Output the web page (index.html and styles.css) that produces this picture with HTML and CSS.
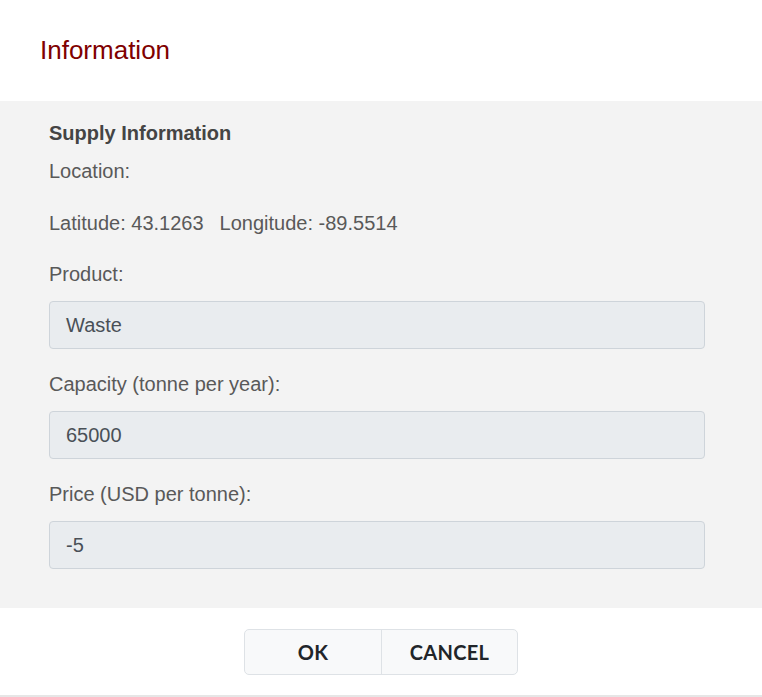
FILE: index.html
```html
<!DOCTYPE html>
<html lang="en">
<head>
<meta charset="utf-8">
<title>Information</title>
<link rel="stylesheet" href="styles.css">
</head>
<body>
<div class="dialog">
  <header class="dialog-header">
    <h1 class="dialog-title">Information</h1>
  </header>
  <main class="dialog-body">
    <h2 class="section-title">Supply Information</h2>
    <div class="text-row">Location:</div>
    <div class="text-row coords"><span>Latitude: 43.1263</span><span>Longitude: -89.5514</span></div>
    <div class="field">
      <label class="field-label">Product:</label>
      <div class="field-input">Waste</div>
    </div>
    <div class="field">
      <label class="field-label">Capacity (tonne per year):</label>
      <div class="field-input">65000</div>
    </div>
    <div class="field">
      <label class="field-label">Price (USD per tonne):</label>
      <div class="field-input">-5</div>
    </div>
  </main>
  <footer class="dialog-footer">
    <div class="btn-group">
      <button class="btn">OK</button>
      <button class="btn">CANCEL</button>
    </div>
  </footer>
</div>
</body>
</html>
```

FILE: styles.css
```css
html, body {
  margin: 0;
  padding: 0;
  background: #ffffff;
}
body {
  font-family: "Liberation Sans", Arial, sans-serif;
}
.dialog {
  width: 762px;
  height: 697px;
  display: flex;
  flex-direction: column;
  box-sizing: border-box;
  border-bottom: 2px solid #e6e6e6;
}
.dialog-header {
  height: 101px;
  display: flex;
  align-items: center;
  padding-left: 40px;
  box-sizing: border-box;
}
.dialog-title {
  margin: 0;
  font-weight: normal;
  font-size: 26px;
  line-height: 30px;
  color: #800000;
  position: relative;
  top: -1px;
}
.dialog-body {
  background: #f3f3f3;
  padding: 20px 57px 39px 49px;
  display: flex;
  flex-direction: column;
}
.section-title {
  margin: 0 0 14px 0;
  font-size: 20px;
  line-height: 24px;
  font-weight: bold;
  color: #444444;
}
.text-row {
  font-size: 20px;
  line-height: 24px;
  color: #595959;
  margin-bottom: 28px;
}
.coords {
  display: flex;
  gap: 16px;
  margin-bottom: 27px;
}
.field {
  display: flex;
  flex-direction: column;
  gap: 15px;
  margin-bottom: 23px;
}
.field:last-child {
  margin-bottom: 0;
}
.field-label {
  font-size: 20px;
  line-height: 24px;
  color: #595959;
}
.field-input {
  height: 48px;
  box-sizing: border-box;
  background: #e9ecef;
  border: 1px solid #ced4da;
  border-radius: 4px;
  padding: 0 16px;
  display: flex;
  align-items: center;
  font-size: 20px;
  color: #495057;
}
.dialog-footer {
  flex: 1;
  display: flex;
  justify-content: center;
  padding-top: 21px;
  box-sizing: border-box;
}
.btn-group {
  display: flex;
  height: 46px;
  border: 1px solid #dee2e6;
  border-radius: 5px;
  background: #f8f9fa;
  overflow: hidden;
  box-sizing: border-box;
}
.btn {
  width: 136px;
  border: none;
  background: transparent;
  font-family: Lato, "Noto Sans", sans-serif;
  font-weight: bold;
  font-size: 20px;
  color: #212529;
  padding: 0;
  letter-spacing: 0.3px;
}
.btn + .btn {
  border-left: 1px solid #dee2e6;
}
```
